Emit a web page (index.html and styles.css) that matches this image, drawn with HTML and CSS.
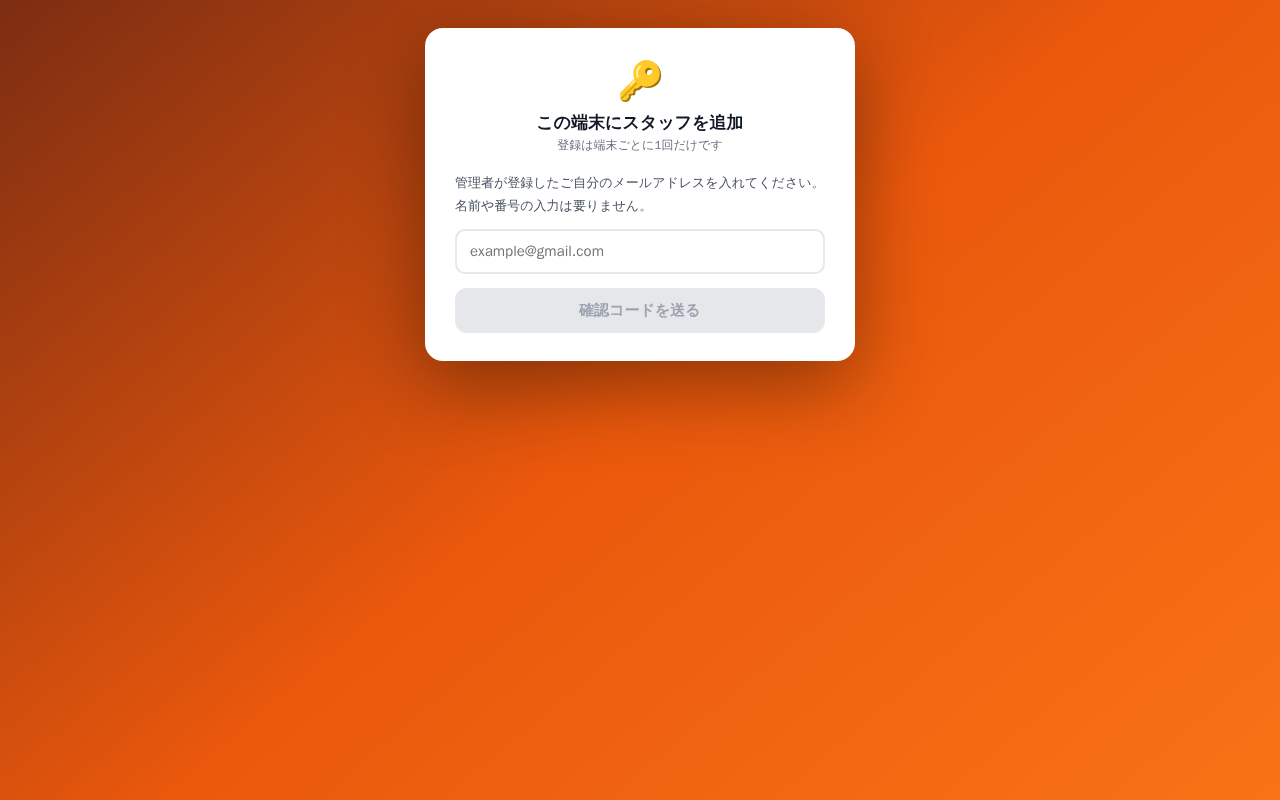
FILE: index.html
```html
<!DOCTYPE html>
<html lang="ja">
<head>
  <meta charset="UTF-8">
  <meta name="viewport" content="width=device-width, initial-scale=1">
  <title>この端末にスタッフを追加</title>
  <link rel="stylesheet" href="styles.css">
</head>
<body>
  <main class="card">
    <div class="head">
      <div class="icon" aria-hidden="true">🔑</div>
      <h1>この端末にスタッフを追加</h1>
      <p class="sub">登録は端末ごとに1回だけです</p>
    </div>
    <form id="registerForm" autocomplete="off">
      <label class="lead" for="email">管理者が登録したご自分のメールアドレスを入れてください。<br>名前や番号の入力は要りません。</label>
      <input type="email" id="email" placeholder="example@gmail.com" required>
      <button type="submit" id="sendBtn" disabled>確認コードを送る</button>
    </form>
  </main>
  <script>
    // メールアドレスが入力されたらボタンを有効化
    const email = document.getElementById('email');
    const sendBtn = document.getElementById('sendBtn');
    email.addEventListener('input', function() {
      sendBtn.disabled = !email.value || !email.checkValidity();
    });
    document.getElementById('registerForm').addEventListener('submit', function(e) {
      e.preventDefault();
    });
  </script>
</body>
</html>
```
FILE: styles.css
```css
* {
  box-sizing: border-box;
  margin: 0;
  padding: 0;
}
body {
  min-height: 100vh;
  padding: 28px 16px;
  background: linear-gradient(140deg, #7c2d12 0%, #ea580c 50%, #f97316 100%);
  color: #111827;
  font-family: "WenQuanYi Zen Hei", "Noto Sans CJK JP", sans-serif;
}
.card {
  max-width: 430px;
  margin: 0 auto;
  padding: 28px 30px;
  background: #fff;
  border-radius: 18px;
  box-shadow: 0 24px 80px rgba(0,0,0,0.4);
}
.head {
  margin-bottom: 17px;
  text-align: center;
}
.icon {
  margin-bottom: 4px;
  font-size: 38px;
  line-height: 50px;
}
h1 {
  font-size: 17px;
  font-weight: 800;
  line-height: 26px;
}
.sub {
  color: #6b7280;
  font-size: 12px;
  line-height: 18px;
}
.lead {
  display: block;
  margin-bottom: 12px;
  color: #4b5563;
  font-size: 13px;
  line-height: 23px;
}
input[type="email"] {
  display: block;
  width: 100%;
  height: 45px;
  margin-bottom: 14px;
  padding: 0 13px;
  border: 2px solid #e5e7eb;
  border-radius: 10px;
  font-family: inherit;
  font-size: 15px;
  outline: none;
}
input[type="email"]:focus {
  border-color: #ea580c;
}
button {
  display: block;
  width: 100%;
  height: 45px;
  background: #ea580c;
  color: #fff;
  border: none;
  border-radius: 12px;
  font-family: inherit;
  font-size: 15px;
  font-weight: 800;
  cursor: pointer;
}
button:disabled {
  background: #e5e7eb;
  color: #9ca3af;
  cursor: default;
}
```
